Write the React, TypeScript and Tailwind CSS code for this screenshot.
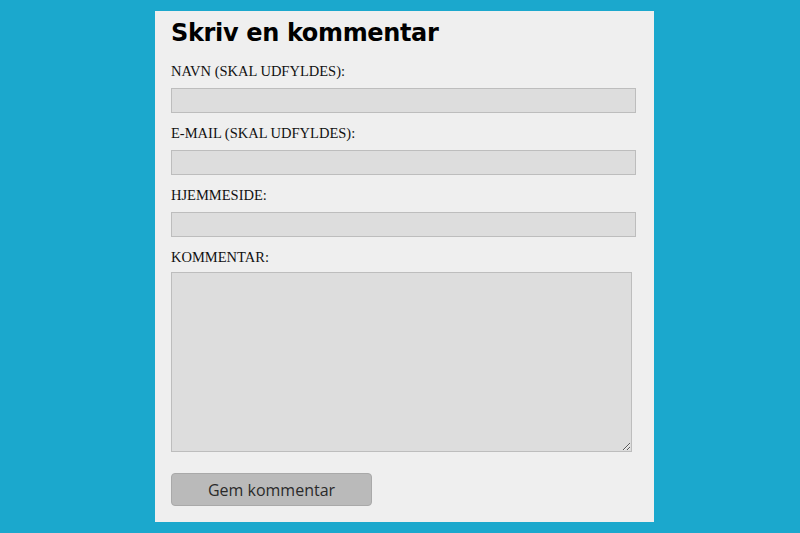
export default function App() {
  const fields = [
    { label: "NAVN (SKAL UDFYLDES):" },
    { label: "E-MAIL (SKAL UDFYLDES):" },
    { label: "HJEMMESIDE:" },
  ];

  return (
    <div className="min-h-screen bg-[#1ba8cd] pl-[155px] pt-[11px]">
      <form className="flex h-[511px] w-[499px] flex-col bg-[#efefef] px-4 pt-[6px]">
        <h2 className="h-8 font-['DejaVu_Sans',Verdana,sans-serif] text-[24px] leading-8 font-bold tracking-[-0.35px] text-black">
          Skriv en kommentar
        </h2>

        {fields.map((field, i) => (
          <div key={field.label} className="flex flex-col">
            <label
              className={
                (i === 0 ? "mt-[12px] " : "mt-[10px] ") +
                "h-5 font-['Liberation_Serif','Times_New_Roman',serif] text-[14.5px] leading-5 text-[#111]"
              }
            >
              {field.label}
            </label>
            <input
              type="text"
              className="mt-[7px] h-[25px] w-[465px] border border-[#bdbdbd] bg-[#dddddd] outline-none"
            />
          </div>
        ))}

        <label className="mt-[10px] h-5 font-['Liberation_Serif','Times_New_Roman',serif] text-[14.5px] leading-5 text-[#111]">
          KOMMENTAR:
        </label>
        <textarea className="mt-[5px] h-[180px] w-[461px] border border-[#bdbdbd] bg-[#dddddd] outline-none" />

        <button
          type="button"
          className="mt-[21px] h-[33px] w-[201px] rounded-[4px] border border-[#a9a9a9] bg-[#bababa] font-['Open_Sans',sans-serif] text-[16px] text-[#2a2a2a]"
        >
          Gem kommentar
        </button>
      </form>
    </div>
  );
}
